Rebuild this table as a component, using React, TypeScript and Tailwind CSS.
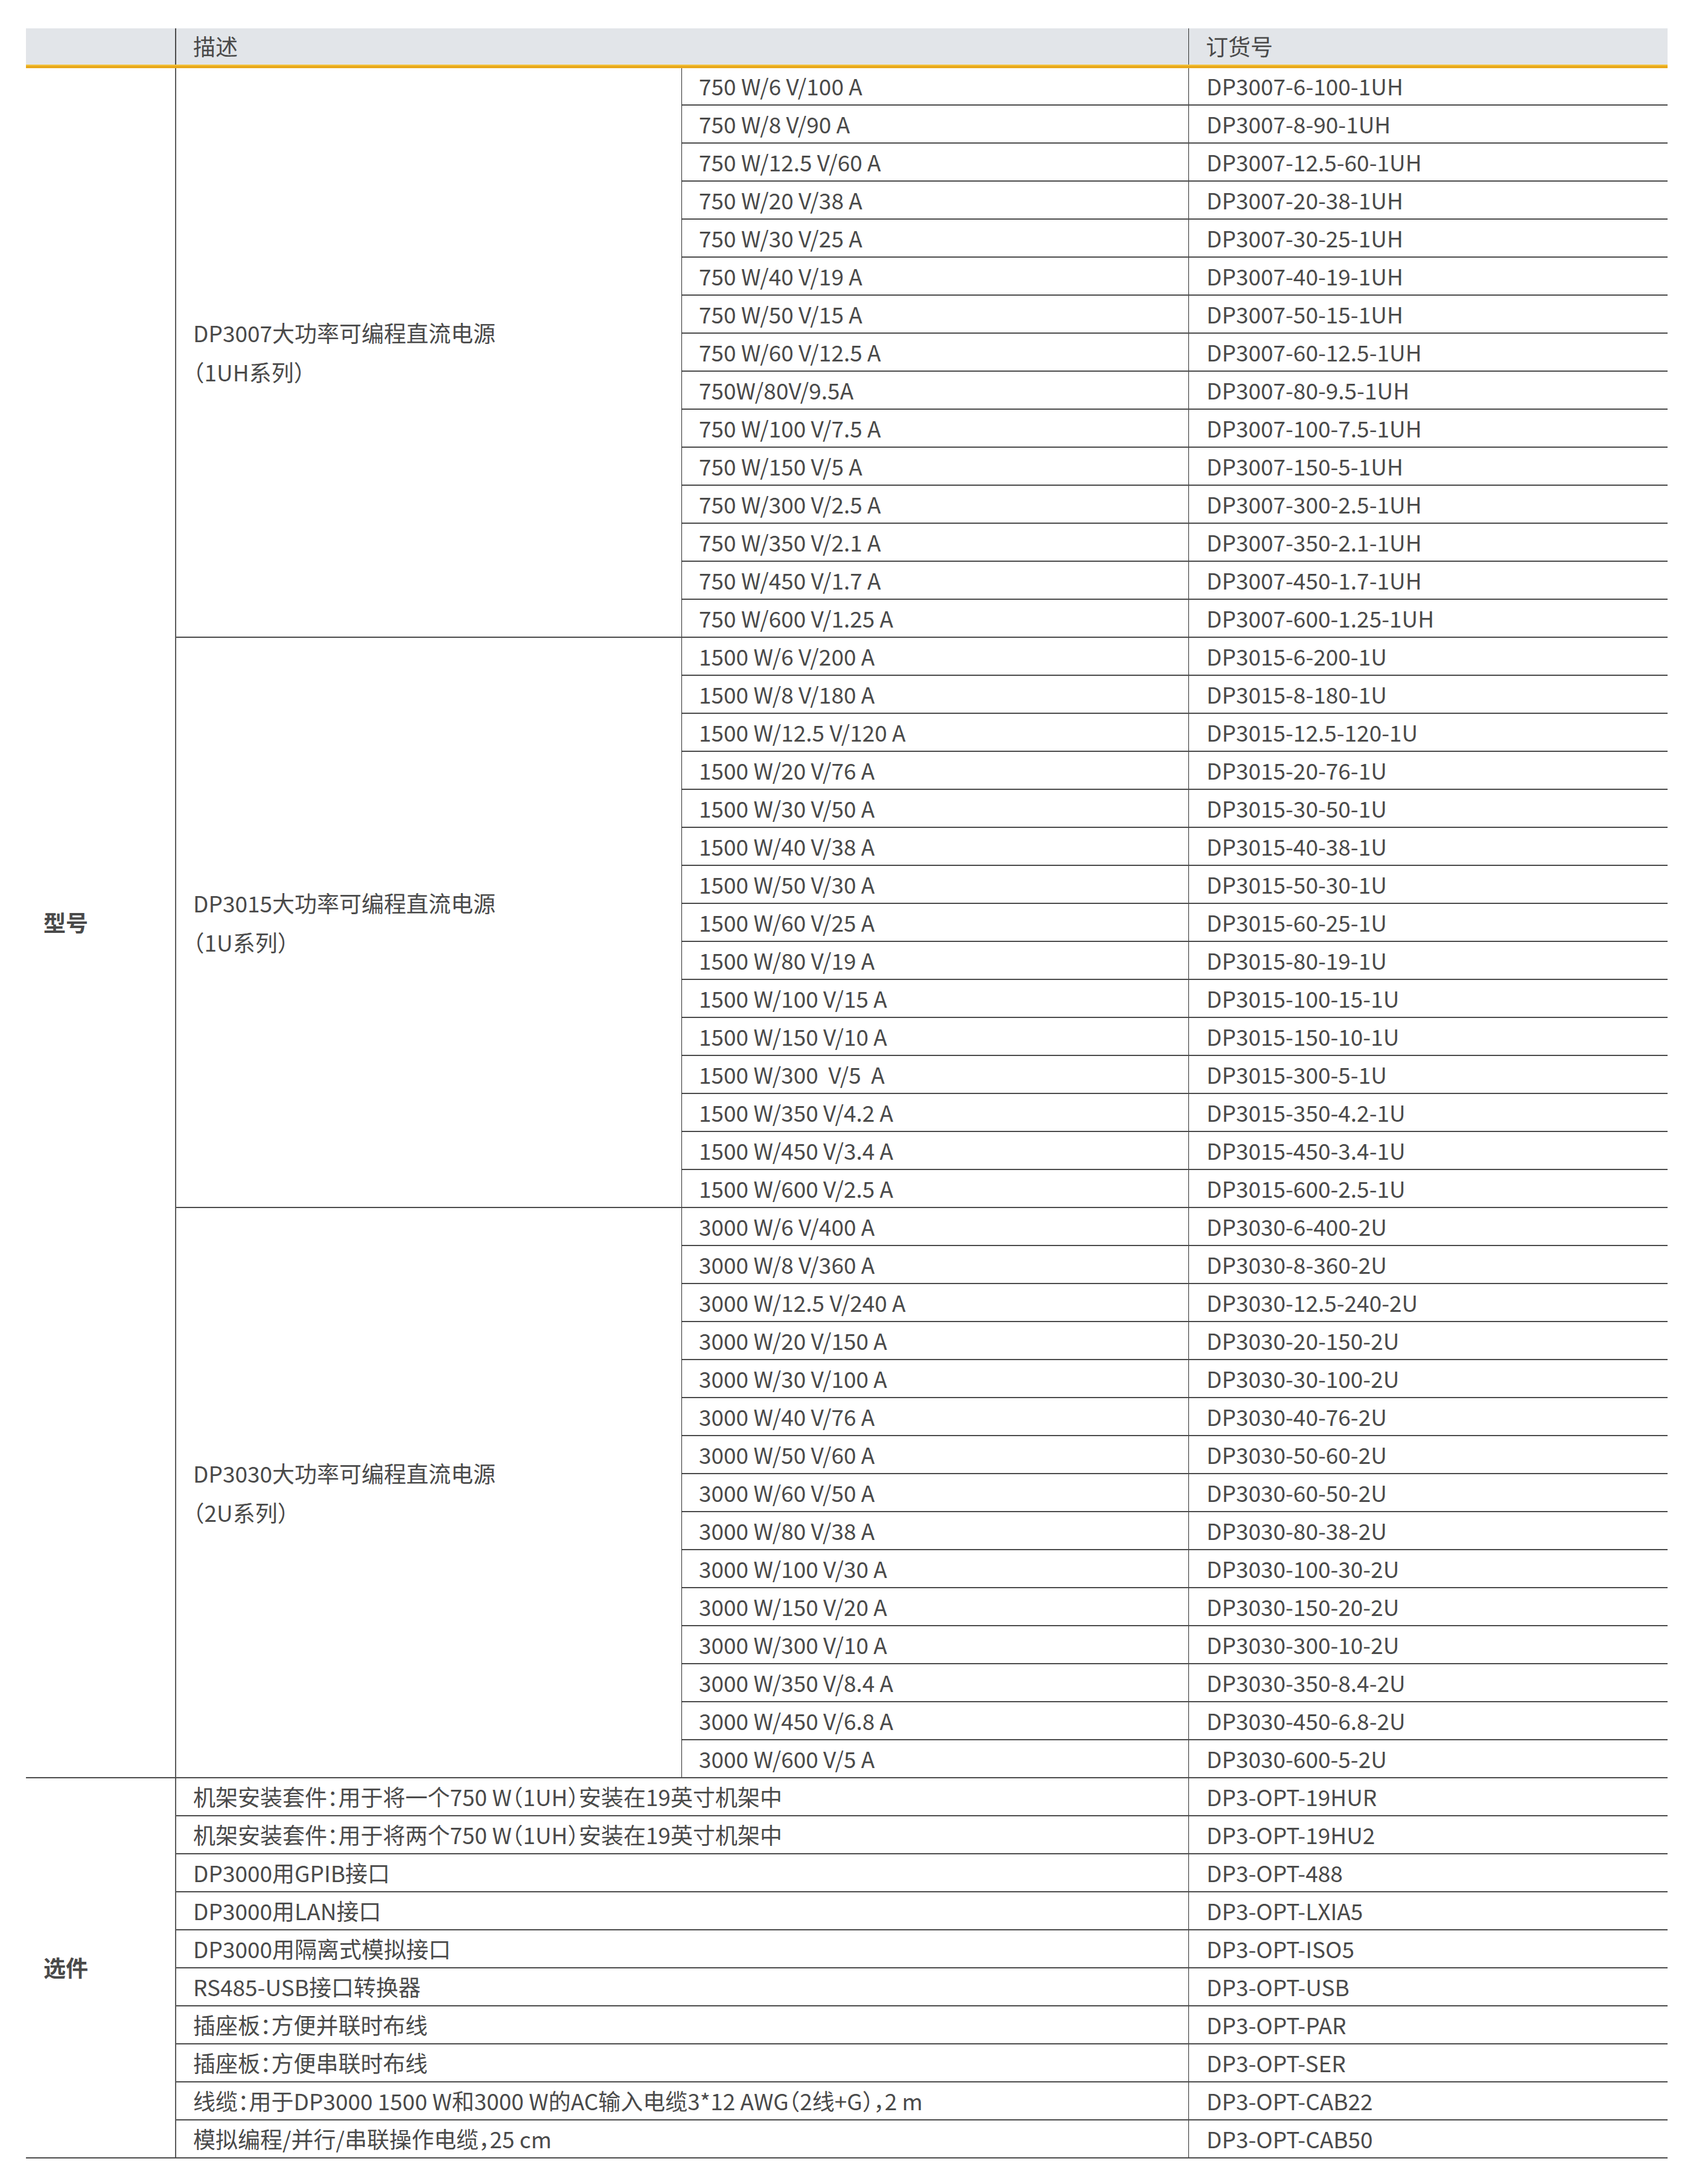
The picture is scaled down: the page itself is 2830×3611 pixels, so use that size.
const groups = [
  {
    name: "DP3007大功率可编程直流电源",
    series: "（1UH系列）",
    rows: [
      ["750 W/6 V/100 A", "DP3007-6-100-1UH"],
      ["750 W/8 V/90 A", "DP3007-8-90-1UH"],
      ["750 W/12.5 V/60 A", "DP3007-12.5-60-1UH"],
      ["750 W/20 V/38 A", "DP3007-20-38-1UH"],
      ["750 W/30 V/25 A", "DP3007-30-25-1UH"],
      ["750 W/40 V/19 A", "DP3007-40-19-1UH"],
      ["750 W/50 V/15 A", "DP3007-50-15-1UH"],
      ["750 W/60 V/12.5 A", "DP3007-60-12.5-1UH"],
      ["750W/80V/9.5A", "DP3007-80-9.5-1UH"],
      ["750 W/100 V/7.5 A", "DP3007-100-7.5-1UH"],
      ["750 W/150 V/5 A", "DP3007-150-5-1UH"],
      ["750 W/300 V/2.5 A", "DP3007-300-2.5-1UH"],
      ["750 W/350 V/2.1 A", "DP3007-350-2.1-1UH"],
      ["750 W/450 V/1.7 A", "DP3007-450-1.7-1UH"],
      ["750 W/600 V/1.25 A", "DP3007-600-1.25-1UH"],
    ],
  },
  {
    name: "DP3015大功率可编程直流电源",
    series: "（1U系列）",
    rows: [
      ["1500 W/6 V/200 A", "DP3015-6-200-1U"],
      ["1500 W/8 V/180 A", "DP3015-8-180-1U"],
      ["1500 W/12.5 V/120 A", "DP3015-12.5-120-1U"],
      ["1500 W/20 V/76 A", "DP3015-20-76-1U"],
      ["1500 W/30 V/50 A", "DP3015-30-50-1U"],
      ["1500 W/40 V/38 A", "DP3015-40-38-1U"],
      ["1500 W/50 V/30 A", "DP3015-50-30-1U"],
      ["1500 W/60 V/25 A", "DP3015-60-25-1U"],
      ["1500 W/80 V/19 A", "DP3015-80-19-1U"],
      ["1500 W/100 V/15 A", "DP3015-100-15-1U"],
      ["1500 W/150 V/10 A", "DP3015-150-10-1U"],
      ["1500 W/300\u00a0 V/5\u00a0 A", "DP3015-300-5-1U"],
      ["1500 W/350 V/4.2 A", "DP3015-350-4.2-1U"],
      ["1500 W/450 V/3.4 A", "DP3015-450-3.4-1U"],
      ["1500 W/600 V/2.5 A", "DP3015-600-2.5-1U"],
    ],
  },
  {
    name: "DP3030大功率可编程直流电源",
    series: "（2U系列）",
    rows: [
      ["3000 W/6 V/400 A", "DP3030-6-400-2U"],
      ["3000 W/8 V/360 A", "DP3030-8-360-2U"],
      ["3000 W/12.5 V/240 A", "DP3030-12.5-240-2U"],
      ["3000 W/20 V/150 A", "DP3030-20-150-2U"],
      ["3000 W/30 V/100 A", "DP3030-30-100-2U"],
      ["3000 W/40 V/76 A", "DP3030-40-76-2U"],
      ["3000 W/50 V/60 A", "DP3030-50-60-2U"],
      ["3000 W/60 V/50 A", "DP3030-60-50-2U"],
      ["3000 W/80 V/38 A", "DP3030-80-38-2U"],
      ["3000 W/100 V/30 A", "DP3030-100-30-2U"],
      ["3000 W/150 V/20 A", "DP3030-150-20-2U"],
      ["3000 W/300 V/10 A", "DP3030-300-10-2U"],
      ["3000 W/350 V/8.4 A", "DP3030-350-8.4-2U"],
      ["3000 W/450 V/6.8 A", "DP3030-450-6.8-2U"],
      ["3000 W/600 V/5 A", "DP3030-600-5-2U"],
    ],
  },
];

const options = [
  ["机架安装套件：用于将一个750 W（1UH）安装在19英寸机架中", "DP3-OPT-19HUR"],
  ["机架安装套件：用于将两个750 W（1UH）安装在19英寸机架中", "DP3-OPT-19HU2"],
  ["DP3000用GPIB接口", "DP3-OPT-488"],
  ["DP3000用LAN接口", "DP3-OPT-LXIA5"],
  ["DP3000用隔离式模拟接口", "DP3-OPT-ISO5"],
  ["RS485-USB接口转换器", "DP3-OPT-USB"],
  ["插座板：方便并联时布线", "DP3-OPT-PAR"],
  ["插座板：方便串联时布线", "DP3-OPT-SER"],
  ["线缆：用于DP3000 1500 W和3000 W的AC输入电缆3*12 AWG（2线+G），2 m", "DP3-OPT-CAB22"],
  ["模拟编程/并行/串联操作电缆，25 cm", "DP3-OPT-CAB50"],
];

export default function App() {
  return (
    <div className="min-h-screen bg-white pt-[47px] pl-[43px] font-['Noto_Sans_CJK_SC',sans-serif] text-[37px] text-[#4a4a4a] [font-feature-settings:'halt']">
      <div className="w-[2720px]">
        {/* Header */}
        <div className="flex h-[60px] bg-[#e2e5e9]">
          <div className="w-[249px] border-r-2 border-[#4a4a4a]" />
          <div className="flex w-[1678px] items-center border-r border-[#2b2b2b] pl-[28px]">描述</div>
          <div className="flex flex-1 items-center pl-[28px]">订货号</div>
        </div>
        <div className="h-[6px] border-t-2 border-[#f3c33d] bg-[#e8a81b]" />

        {/* 型号 */}
        <div className="flex border-b-2 border-[#4a4a4a]">
          <div className="flex w-[249px] items-center border-r-2 border-[#5a5a5a] pl-[29px] font-bold">型号</div>
          <div className="flex-1">
            {groups.map((g, gi) => (
              <div key={g.name} className={gi < groups.length - 1 ? "flex border-b-2 border-[#4a4a4a]" : "flex"}>
                <div className="flex w-[838px] flex-col justify-center border-r border-[#2b2b2b] pl-[28px] leading-[65px]">
                  <div>{g.name}</div>
                  <div>{g.series}</div>
                </div>
                <div className="flex-1">
                  {g.rows.map((r, ri) => {
                    const last = ri === g.rows.length - 1;
                    const first = gi === 0 && ri === 0;
                    return (
                      <div
                        key={r[1]}
                        className={
                          last
                            ? "flex h-[61px] items-center"
                            : first
                            ? "flex h-[62px] items-center border-b-2 border-[#4a4a4a]"
                            : "flex h-[63px] items-center border-b-2 border-[#4a4a4a]"
                        }
                      >
                        <div className="flex h-full w-[840px] items-center border-r border-[#2b2b2b] pl-[28px] whitespace-pre">{r[0]}</div>
                        <div className="flex h-full flex-1 items-center pl-[29px]">{r[1]}</div>
                      </div>
                    );
                  })}
                </div>
              </div>
            ))}
          </div>
        </div>

        {/* 选件 */}
        <div className="flex border-b-2 border-[#4a4a4a]">
          <div className="flex w-[249px] items-center border-r-2 border-[#5a5a5a] pl-[29px] font-bold">选件</div>
          <div className="flex-1">
            {options.map((o, oi) => (
              <div
                key={o[1]}
                className={oi < options.length - 1 ? "flex h-[63px] items-center border-b-2 border-[#4a4a4a]" : "flex h-[61px] items-center"}
              >
                <div className="flex h-full w-[1678px] items-center border-r border-[#2b2b2b] pl-[28px]">{o[0]}</div>
                <div className="flex h-full flex-1 items-center pl-[29px]">{o[1]}</div>
              </div>
            ))}
          </div>
        </div>
      </div>
    </div>
  );
}
